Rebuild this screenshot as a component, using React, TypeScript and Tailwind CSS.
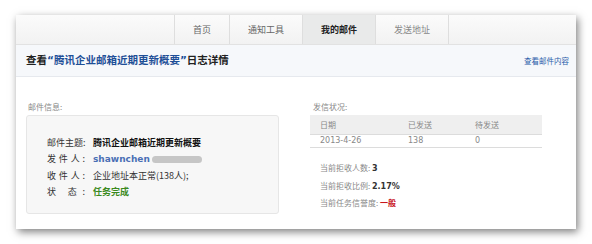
import React from "react";

const cjk = { fontFamily: '"Noto Sans CJK SC", "Noto Sans", sans-serif' };
const mix = { fontFamily: '"DejaVu Sans", "Noto Sans CJK SC", sans-serif' };

function Label({ chars }: { chars: string[] }) {
  return (
    <span className="flex w-[38px] justify-between text-[#333]">
      {chars.map((c, i) => (
        <span key={i}>{c}</span>
      ))}
    </span>
  );
}

export default function App() {
  return (
    <div className="w-[592px] h-[244px] bg-white pt-[15px] pl-[16px]" style={cjk}>
      <div className="w-[560px] h-[214px] bg-white shadow-[2px_3px_8px_rgba(0,0,0,0.5)] flex flex-col">
        {/* tab bar */}
        <div className="h-[30px] border-b border-[#e2e2e2] bg-gradient-to-b from-[#fbfbfb] to-[#f2f2f2] flex pl-[158px]">
          <div className="h-full flex items-center px-[18px] border-l border-[#dedede] text-[9px] text-[#666]">首页</div>
          <div className="h-full flex items-center px-[18px] border-l border-[#dedede] text-[9px] text-[#666]">通知工具</div>
          <div className="h-full flex items-center px-[18px] border-l border-[#dedede] bg-[#e9eaea] text-[9px] font-bold text-[#222]">我的邮件</div>
          <div className="h-full flex items-center px-[18px] border-l border-r border-[#dedede] text-[9px] text-[#888]">发送地址</div>
        </div>
        {/* title row */}
        <div className="h-[32px] bg-[#f6f8fb] border-b border-[#e6e9ee] flex items-center justify-between pl-[10px] pr-[7px]">
          <div className="text-[10.5px] font-bold text-[#222]">
            查看<span className="text-[#1e4f97]"><span style={mix}>“</span>腾讯企业邮箱近期更新概要<span style={mix}>”</span></span>日志详情
          </div>
          <div className="text-[7.5px] text-[#2a5caa]">查看邮件内容</div>
        </div>
        {/* content */}
        <div className="flex px-[10px] pt-[24px]">
          <div className="w-[253px] flex flex-col">
            <div className="pl-[2px] text-[8px] leading-[12px] text-[#888] mb-[2px]">邮件信息:</div>
            <div className="h-[99px] bg-[#f7f7f7] border border-[#e6e6e6] rounded-[3px] pt-[19px] pl-[20px] text-[9px] leading-[16.3px]">
              <div className="flex gap-[8px]">
                <Label chars={["邮", "件", "主", "题", ":"]} />
                <span className="font-bold text-[#111]">腾讯企业邮箱近期更新概要</span>
              </div>
              <div className="flex gap-[8px] items-center">
                <Label chars={["发", "件", "人", ":"]} />
                <span className="font-bold text-[#4a6fb5]" style={mix}>shawnchen</span>
                <span className="inline-block w-[50px] h-[7px] rounded-full bg-[#c6c6c6] blur-[0.4px] -ml-[6px]"></span>
              </div>
              <div className="flex gap-[8px]">
                <Label chars={["收", "件", "人", ":"]} />
                <span className="text-[#333]">企业地址本正常(138人);</span>
              </div>
              <div className="flex gap-[8px]">
                <Label chars={["状", "", "态", ":"]} />
                <span className="font-bold text-[#3b8a1e]">任务完成</span>
              </div>
            </div>
          </div>
          <div className="w-[232px] ml-[31px] flex flex-col">
            <div className="pl-[3px] text-[8px] leading-[12px] text-[#888] mb-[2px]">发信状况:</div>
            <div className="h-[20px] bg-[#efefef] border-b border-[#dcdcdc] flex items-center text-[8px] text-[#888]">
              <span className="pl-[10px] w-[98px]">日期</span>
              <span className="w-[67px]">已发送</span>
              <span>待发送</span>
            </div>
            <div className="h-[13px] border-b border-[#dcdcdc] flex items-center text-[8px] text-[#888]" style={mix}>
              <span className="pl-[10px] w-[98px]">2013-4-26</span>
              <span className="w-[67px]">138</span>
              <span>0</span>
            </div>
            <div className="pl-[10px] pt-[12px] text-[8px] leading-[16.5px] text-[#888]">
              <div>当前拒收人数: <span className="font-bold text-[#333]" style={mix}>3</span></div>
              <div>当前拒收比例: <span className="font-bold text-[#333]" style={mix}>2.17%</span></div>
              <div>当前任务信誉度: <span className="font-bold text-[#c8161d]">一般</span></div>
            </div>
          </div>
        </div>
      </div>
    </div>
  );
}
